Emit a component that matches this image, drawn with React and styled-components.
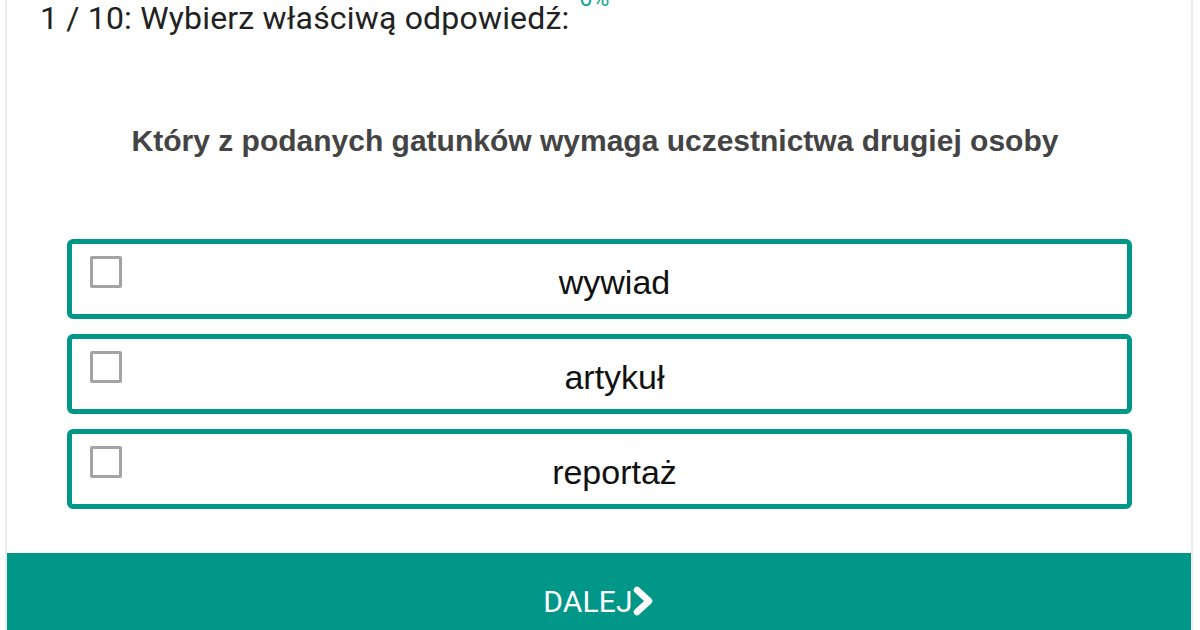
import React from 'react';
import styled, { createGlobalStyle } from 'styled-components';

const GlobalStyle = createGlobalStyle`
  html, body {
    margin: 0;
    padding: 0;
    background: #fff;
    overflow: hidden;
  }
  body {
    font-family: "Liberation Sans", Arial, sans-serif;
  }
`;

const Card = styled.main`
  margin: 0 7px 0 5px;
  border-left: 2px solid #ececec;
  border-right: 2px solid #ececec;
`;

const Header = styled.header`
  display: flex;
  align-items: flex-start;
  padding: 0 0 0 33px;
  height: 60px;
`;

const Title = styled.h1`
  margin: 0;
  font-family: Roboto, "Liberation Sans", sans-serif;
  font-weight: 400;
  font-size: 32px;
  line-height: 36px;
  letter-spacing: 0.18px;
  color: #222;
`;

const Progress = styled.span`
  margin: -14px 0 0 10px;
  font-family: Roboto, "Liberation Sans", sans-serif;
  font-size: 23px;
  line-height: 26px;
  color: #16a394;
`;

const Question = styled.h2`
  margin: 63px 0 0;
  padding-right: 8px;
  text-align: center;
  font-weight: 700;
  font-size: 30px;
  line-height: 36px;
  color: #444;
`;

const Options = styled.div`
  display: flex;
  flex-direction: column;
  gap: 15px;
  margin: 80px 59px 0 60px;
`;

const Option = styled.label`
  position: relative;
  display: flex;
  align-items: center;
  justify-content: center;
  height: 80px;
  box-sizing: border-box;
  padding-left: 30px;
  border: 5px solid #009688;
  border-radius: 6px;
  font-size: 34px;
  color: #111;
  cursor: pointer;
`;

const Box = styled.span`
  position: absolute;
  left: 18px;
  top: 12px;
  width: 32px;
  height: 32px;
  box-sizing: border-box;
  border: 3px solid #a3a3a3;
  border-radius: 2px;
  background: #fff;
`;

const Label = styled.span`
  line-height: 40px;
  padding-top: 6px;
`;

const Next = styled.button`
  width: 100%;
  margin-top: 44px;
  height: 96px;
  border: none;
  background: #009688;
  color: #fff;
  display: flex;
  align-items: center;
  justify-content: center;
  font-family: Roboto, "Liberation Sans", sans-serif;
  font-size: 30px;
  letter-spacing: 0.2px;
  padding: 0;
  cursor: pointer;
`;

const Chevron = () => (
  <svg width="22" height="30" viewBox="0 0 22 30" aria-hidden="true">
    <path
      d="M4 4 L16 15 L4 26"
      fill="none"
      stroke="#fff"
      strokeWidth="6.5"
      strokeLinecap="round"
      strokeLinejoin="round"
    />
  </svg>
);

const answers = ['wywiad', 'artykuł', 'reportaż'];

const App = () => (
  <>
    <GlobalStyle />
    <Card>
      <Header>
        <Title>1 / 10: Wybierz właściwą odpowiedź:</Title>
        <Progress>0%</Progress>
      </Header>
      <Question>Który z podanych gatunków wymaga uczestnictwa drugiej osoby</Question>
      <Options>
        {answers.map((a) => (
          <Option key={a}>
            <Box />
            <Label>{a}</Label>
          </Option>
        ))}
      </Options>
      <Next>
        DALEJ
        <Chevron />
      </Next>
    </Card>
  </>
);

export default App;
